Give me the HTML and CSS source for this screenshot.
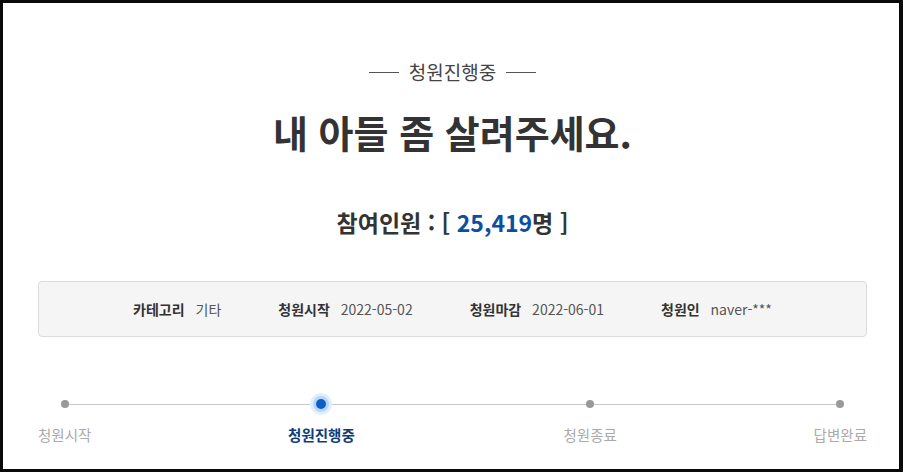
FILE: index.html
```html
<!DOCTYPE html>
<html lang="ko">

<head>
    <meta charset="UTF-8">
    <meta name="viewport" content="width=device-width, initial-scale=1.0">
    <title>청원 상세</title>
    <link rel="stylesheet" href="styles.css">
</head>

<body>
    <div class="page">
        <div class="status">
            <span class="status-line"></span>
            <span>청원진행중</span>
            <span class="status-line"></span>
        </div>

        <h1 class="title">내 아들 좀 살려주세요.</h1>

        <p class="count">참여인원 : [ <span class="count-num">25,419</span>명 ]</p>

        <!-- 청원 정보 -->
        <ul class="info">
            <li><b>카테고리</b> 기타</li>
            <li><b>청원시작</b> 2022-05-02</li>
            <li><b>청원마감</b> 2022-06-01</li>
            <li><b>청원인</b> naver-***</li>
        </ul>

        <!-- 진행 단계 -->
        <div class="steps">
            <div class="steps-line"></div>
            <div class="step">
                <span class="dot"></span>
                <span class="step-label">청원시작</span>
            </div>
            <div class="step active">
                <span class="dot"></span>
                <span class="step-label">청원진행중</span>
            </div>
            <div class="step">
                <span class="dot"></span>
                <span class="step-label">청원종료</span>
            </div>
            <div class="step">
                <span class="dot"></span>
                <span class="step-label">답변완료</span>
            </div>
        </div>
    </div>
</body>

</html>
```

FILE: styles.css
```css
html {
    background-color: #0a0a0a;
}

body {
    font-family: "Noto Sans CJK KR", "Noto Sans", sans-serif;
    margin: 0;
    padding: 0;
    color: #333;
}

.page {
    height: 472px;
    box-sizing: border-box;
    border-style: solid;
    border-color: #0a0a0a;
    border-width: 3px 4px 3px 3px;
    background-color: #fff;
    padding: 56px 32px 0 35px;
}

.status {
    display: flex;
    justify-content: center;
    align-items: center;
    gap: 10px;
    font-size: 19px;
    line-height: 26px;
    color: #444;
}

.status-line {
    width: 30px;
    height: 1px;
    background-color: #555;
}

.title {
    margin: 24px 0 0;
    text-align: center;
    font-size: 38px;
    line-height: 46px;
    font-weight: 700;
    color: #333;
}

.count {
    margin: 51px 0 0;
    text-align: center;
    font-size: 23px;
    line-height: 32px;
    font-weight: 700;
    color: #333;
}

.count-num {
    color: #0b4ea2;
}

.info {
    list-style-type: none;
    margin: 43px 0 0;
    padding: 0;
    height: 54px;
    display: flex;
    justify-content: center;
    align-items: center;
    gap: 57px;
    background-color: #f5f5f5;
    border: 1px solid #dcdcdc;
    border-radius: 4px;
    font-size: 14px;
    color: #555;
}

.info b {
    color: #333;
    margin-right: 7px;
}

.steps {
    position: relative;
    margin-top: 58px;
    display: flex;
    justify-content: space-between;
}

.steps-line {
    position: absolute;
    top: 9px;
    left: 26px;
    right: 27px;
    height: 1px;
    background-color: #c8c8c8;
}

.step {
    position: relative;
    display: flex;
    flex-direction: column;
    align-items: center;
    gap: 12px;
}

.step.active {
    margin-right: 12px;
}

.dot {
    width: 8px;
    height: 8px;
    margin: 5px 0;
    border-radius: 50%;
    background-color: #999;
}

.step.active .dot {
    width: 10px;
    height: 10px;
    margin: 4px 0;
    background-color: #0d5fc4;
    box-shadow: 0 0 0 3px #b7d6fb, 0 0 0 6px #e2effd;
}

.step-label {
    font-size: 14.5px;
    line-height: 20px;
    color: #aaa;
}

.step.active .step-label {
    color: #0f3c7a;
    font-weight: 700;
}
```
